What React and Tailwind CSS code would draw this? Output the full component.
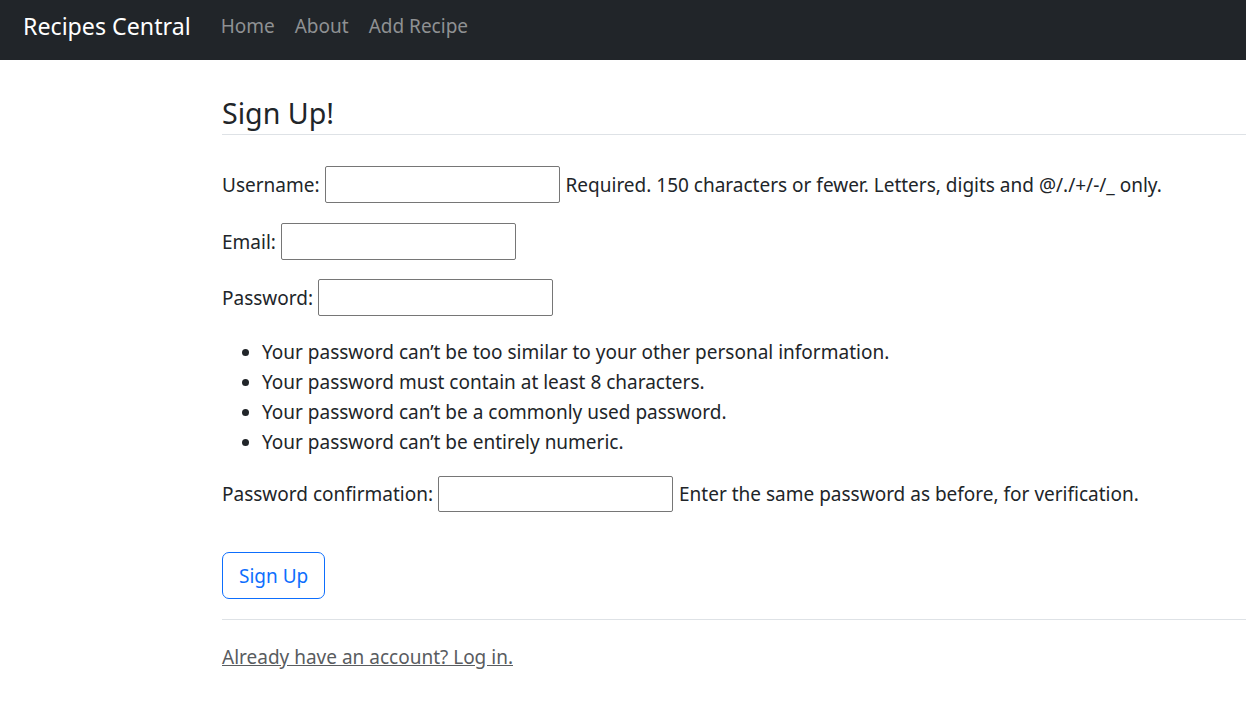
export default function App() {
  const font = { fontFamily: '"Noto Sans", "Open Sans", sans-serif' };
  return (
    <div className="min-h-[720px] bg-white text-[#212529] text-[19px] leading-[30px]" style={font}>
      <nav className="h-[60px] bg-[#212529] flex items-center pl-[23px] pb-[8px]">
        <span className="text-[23.2px] text-white mr-[20px] leading-[36px]">Recipes Central</span>
        <div className="flex">
          <a className="px-[10px] text-[#8f9193]">Home</a>
          <a className="px-[10px] text-[#8f9193]">About</a>
          <a className="px-[10px] text-[#8f9193]">Add Recipe</a>
        </div>
      </nav>
      <main className="pl-[222px]">
        <h1 className="mt-[35px] text-[28.6px] leading-[36px] pb-[3px] border-b border-[#dee2e6]">Sign Up!</h1>
        <div className="mt-[31px]">
          <div className="flex items-center h-[37px] mb-[20px]">
            <span>Username:</span>
            <input className="ml-[5px] w-[235px] h-[37px] border border-[#767676] rounded-[2px]" />
            <span className="ml-[6px]">Required. 150 characters or fewer. Letters, digits and @/./+/-/_ only.</span>
          </div>
          <div className="flex items-center h-[37px] mb-[19px]">
            <span>Email:</span>
            <input className="ml-[5px] w-[235px] h-[37px] border border-[#767676] rounded-[2px]" />
          </div>
          <div className="flex items-center h-[37px] mb-[21px]">
            <span>Password:</span>
            <input className="ml-[5px] w-[235px] h-[37px] border border-[#767676] rounded-[2px]" />
          </div>
          <ul className="list-disc pl-[40px] mb-[19px]">
            <li>Your password can’t be too similar to your other personal information.</li>
            <li>Your password must contain at least 8 characters.</li>
            <li>Your password can’t be a commonly used password.</li>
            <li>Your password can’t be entirely numeric.</li>
          </ul>
          <div className="flex items-center h-[36px]">
            <span>Password confirmation:</span>
            <input className="ml-[5px] w-[235px] h-[36px] border border-[#767676] rounded-[2px]" />
            <span className="ml-[6px]">Enter the same password as before, for verification.</span>
          </div>
        </div>
        <button className="mt-[40px] h-[47px] px-[16px] border border-[#0d6efd] rounded-[7px] text-[#0d6efd]">Sign Up</button>
        <div className="mt-[20px] border-t border-[#dee2e6]"></div>
        <div className="mt-[22px]">
          <a className="underline text-[#595c5f]">Already have an account? Log in.</a>
        </div>
      </main>
    </div>
  );
}
